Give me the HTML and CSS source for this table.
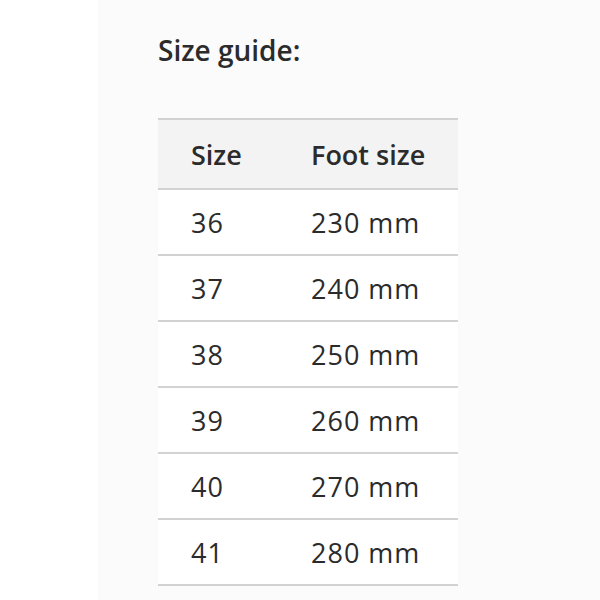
FILE: index.html
```html
<!DOCTYPE html>
<html>
<head>
<meta charset="utf-8">
<link rel="stylesheet" href="styles.css">
</head>
<body>
<div class="page">
  <div class="gutter"></div>
  <div class="panel">
    <h2 class="title">Size guide:</h2>
    <table class="guide">
      <colgroup><col class="col-size"><col class="col-foot"></colgroup>
      <thead>
        <tr><th>Size</th><th>Foot size</th></tr>
      </thead>
      <tbody>
        <tr><td>36</td><td>230 mm</td></tr>
        <tr><td>37</td><td>240 mm</td></tr>
        <tr><td>38</td><td>250 mm</td></tr>
        <tr><td>39</td><td>260 mm</td></tr>
        <tr><td>40</td><td>270 mm</td></tr>
        <tr><td>41</td><td>280 mm</td></tr>
      </tbody>
    </table>
  </div>
</div>
</body>
</html>
```
FILE: styles.css
```css
html, body {
  margin: 0;
  padding: 0;
  background: #ffffff;
}
.page {
  display: flex;
  width: 600px;
  height: 600px;
  font-family: "Open Sans", "Liberation Sans", sans-serif;
  color: #2b2b2b;
}
.gutter {
  width: 98px;
  background: #ffffff;
}
.panel {
  flex: 1;
  background: #fbfbfb;
  padding-left: 60px;
}
.title {
  margin: 30px 0 0 0;
  font-size: 28px;
  font-weight: 600;
  line-height: 40px;
}
.guide {
  margin-top: 48px;
  border-collapse: collapse;
  table-layout: fixed;
  width: 300px;
  background: #ffffff;
  border-top: 2px solid #d2d2d2;
}
.col-size {
  width: 120px;
}
.col-foot {
  width: 180px;
}
.guide th, .guide td {
  text-align: left;
  padding: 0 0 0 33px;
  font-size: 27px;
  border-bottom: 2px solid #d2d2d2;
  white-space: nowrap;
}
.guide th {
  height: 68px;
  background: #f3f3f3;
  font-weight: 600;
}
.guide td {
  height: 64px;
  font-weight: 400;
  letter-spacing: 1px;
}
```
